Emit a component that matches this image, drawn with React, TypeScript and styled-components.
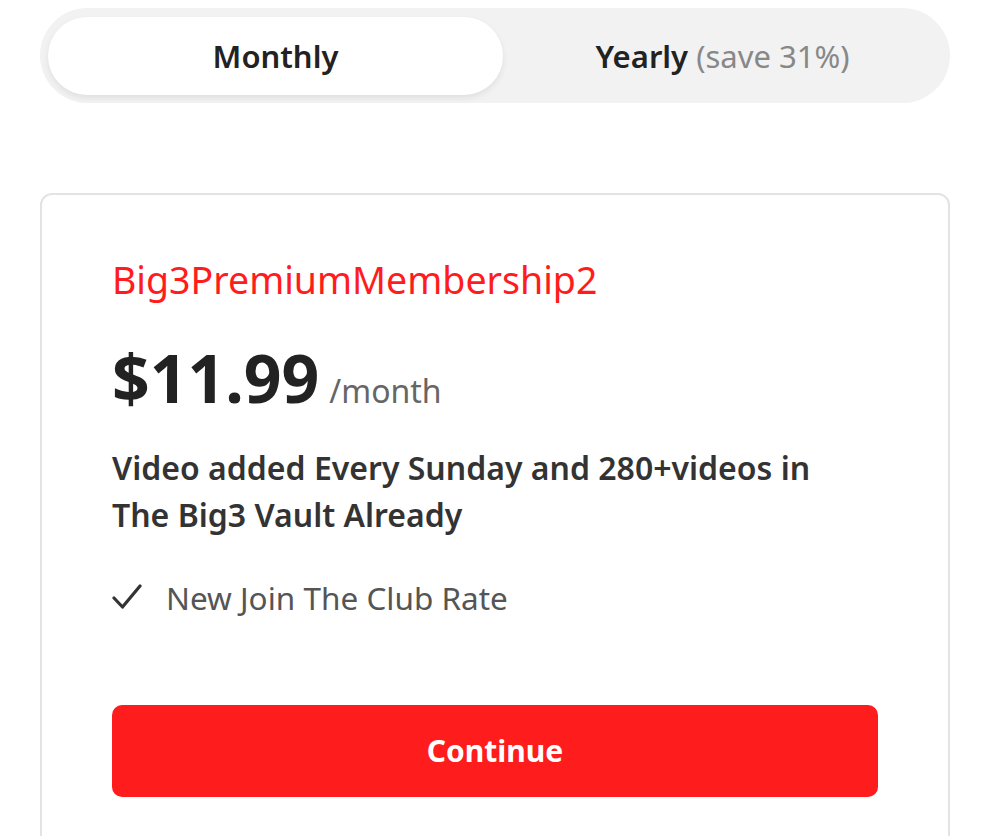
import React, { useState } from "react";
import styled, { createGlobalStyle } from "styled-components";

const GlobalStyle = createGlobalStyle`
  body {
    margin: 0;
    background: #fff;
    font-family: "Noto Sans", "Open Sans", Arial, sans-serif;
  }
`;

const Page = styled.div`
  padding: 8px 40px 0;
`;

const Toggle = styled.div`
  display: grid;
  grid-template-columns: 455px 1fr;
  padding: 9px 8px 8px;
  background: #f2f2f2;
  border-radius: 48px;
  height: 78px;
`;

const ToggleOption = styled.button<{ $active: boolean }>`
  border: none;
  border-radius: 40px;
  font-family: inherit;
  font-size: 31px;
  font-weight: 600;
  color: #222;
  cursor: pointer;
  background: ${(p) => (p.$active ? "#fff" : "transparent")};
  box-shadow: ${(p) => (p.$active ? "0 3px 6px rgba(0, 0, 0, 0.08)" : "none")};
`;

const Save = styled.span`
  font-weight: 400;
  color: #888;
`;

const Card = styled.div`
  margin-top: 90px;
  border: 2px solid #e3e3e3;
  border-radius: 12px;
  padding: 59px 70px 70px;
`;

const PlanName = styled.h2`
  margin: 0;
  font-size: 37.5px;
  font-weight: 400;
  color: #ff1c1c;
`;

const PriceRow = styled.div`
  display: flex;
  align-items: baseline;
  gap: 10px;
  margin-top: 30px;
`;

const Price = styled.span`
  font-size: 66px;
  font-weight: 700;
  line-height: 1.3;
  color: #222;
`;

const Period = styled.span`
  font-size: 32px;
  color: #666;
`;

const Description = styled.p`
  max-width: 730px;
  margin: 23px 0 0;
  font-size: 32px;
  font-weight: 600;
  line-height: 47px;
  color: #333;
`;

const Features = styled.ul`
  list-style: none;
  margin: 38px 0 0;
  padding: 0;
`;

const Feature = styled.li`
  display: flex;
  align-items: center;
  gap: 24px;
  font-size: 31.5px;
  color: #555;
`;

const ContinueButton = styled.button`
  display: block;
  width: 100%;
  height: 92px;
  margin-top: 86px;
  border: none;
  border-radius: 10px;
  background: #ff1c1c;
  color: #fff;
  font-family: inherit;
  font-size: 30px;
  font-weight: 700;
  cursor: pointer;
`;

function Check() {
  return (
    <svg width="30" height="30" viewBox="0 0 30 30" fill="none">
      <path d="M2 16l8.5 9L28 4" stroke="#333" strokeWidth="3.2" strokeLinecap="round" strokeLinejoin="round" />
    </svg>
  );
}

export default function App() {
  const [plan, setPlan] = useState<"monthly" | "yearly">("monthly");
  return (
    <Page>
      <GlobalStyle />
      <Toggle>
        <ToggleOption $active={plan === "monthly"} onClick={() => setPlan("monthly")}>
          Monthly
        </ToggleOption>
        <ToggleOption $active={plan === "yearly"} onClick={() => setPlan("yearly")}>
          Yearly <Save>(save 31%)</Save>
        </ToggleOption>
      </Toggle>
      <Card>
        <PlanName>Big3PremiumMembership2</PlanName>
        <PriceRow>
          <Price>$11.99</Price>
          <Period>/month</Period>
        </PriceRow>
        <Description>Video added Every Sunday and 280+videos in The Big3 Vault Already</Description>
        <Features>
          <Feature>
            <Check />
            New Join The Club Rate
          </Feature>
        </Features>
        <ContinueButton>Continue</ContinueButton>
      </Card>
    </Page>
  );
}
